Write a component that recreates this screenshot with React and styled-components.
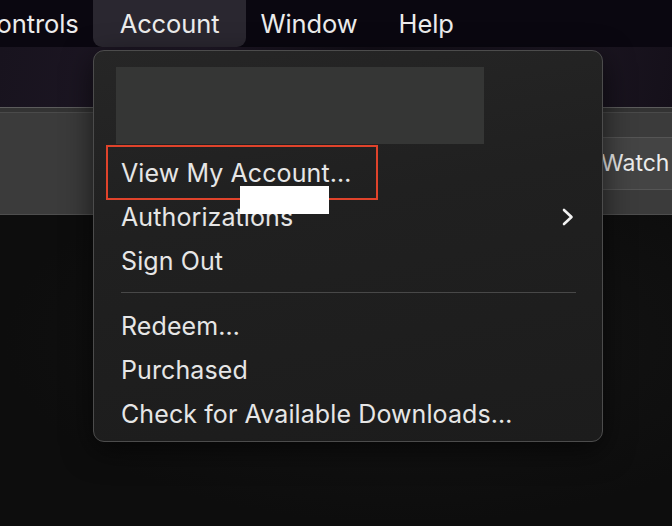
import React from "react";
import styled, { createGlobalStyle } from "styled-components";

const Global = createGlobalStyle`
  html, body {
    margin: 0;
    padding: 0;
    background: #0e0e0e;
  }
  body {
    font-family: Inter, "Noto Sans", "Liberation Sans", sans-serif;
    -webkit-font-smoothing: antialiased;
  }
`;

const Page = styled.div`
  position: relative;
  width: 672px;
  height: 526px;
  overflow: hidden;
  display: flex;
  flex-direction: column;
  background: #0f0f0f;
`;

const MenuBar = styled.div`
  height: 47px;
  flex: none;
  display: flex;
  align-items: center;
  gap: 13px;
  margin-left: -36px;
  background: #0a0710;
`;

const BarItem = styled.div`
  height: 47px;
  display: flex;
  align-items: center;
  padding: 0 ${(p) => (p.$active ? "27px" : "14px")};
  margin: 0 ${(p) => (p.$active ? "-13px" : "0")};
  border-radius: 0 0 9px 9px;
  background: ${(p) => (p.$active ? "#2a2730" : "transparent")};
  color: #ececec;
  font-size: 25.5px;
  letter-spacing: -0.1px;
`;

const Photo = styled.div`
  height: 60px;
  flex: none;
  background: linear-gradient(100deg, #18131e 0%, #1f1826 30%, #130f18 55%, #1d1723 80%, #15101a 100%);
`;

const Toolbar = styled.div`
  height: 108px;
  flex: none;
  display: flex;
  flex-direction: column;
  justify-content: center;
  align-items: flex-end;
  box-sizing: border-box;
  border-top: 1px solid #5c5c5c;
  border-bottom: 1px solid #4e4e4e;
  background: linear-gradient(#333 0, #333 4px, #4a4a4a 4px, #4a4a4a 5px, #3b3b3b 5px);
`;

const WatchButton = styled.div`
  height: 53px;
  width: 200px;
  margin-right: -4px;
  margin-top: 4px;
  box-sizing: border-box;
  display: flex;
  align-items: center;
  padding-left: 125px;
  border-top: 1px solid #555;
  border-bottom: 1px solid #555;
  background: #444;
  color: #ececec;
  font-size: 23px;
`;

const Floor = styled.div`
  flex: 1;
  background: radial-gradient(ellipse at 60% 40%, #151515 0%, #0d0d0d 70%);
`;

const Menu = styled.div`
  position: absolute;
  left: 93px;
  top: 50px;
  width: 510px;
  height: 392px;
  box-sizing: border-box;
  padding: 16px 0 7px;
  border: 1px solid #4c4c4c;
  border-radius: 11px;
  background: linear-gradient(170deg, #262626 0%, #202020 40%, #1c1c1c 100%);
  box-shadow: 0 8px 30px rgba(0, 0, 0, 0.6);
`;

const Placeholder = styled.div`
  width: 368px;
  height: 77px;
  margin: 0 0 7px 22px;
  background: #353635;
`;

const Row = styled.div`
  position: relative;
  height: 44px;
  display: flex;
  align-items: center;
  justify-content: space-between;
  padding: 0 26px 0 27px;
  color: #e6e6e6;
  font-size: 25px;
  letter-spacing: 0.1px;

  ${(p) =>
    p.$marked &&
    `
    &::after {
      content: "";
      position: absolute;
      left: 12px;
      top: -6px;
      width: 272px;
      height: 55px;
      box-sizing: border-box;
      border: 2px solid #e0432b;
    }
  `}
`;

const Separator = styled.div`
  height: 1px;
  margin: 9px 26px 11px 27px;
  background: #484848;
`;

const Redaction = styled.div`
  position: absolute;
  left: 146px;
  top: 135px;
  width: 89px;
  height: 28px;
  background: #ffffff;
`;

const Chevron = () => (
  <svg width="16" height="18" viewBox="0 0 16 18" fill="none">
    <path d="M4 2l7.5 7L4 16" stroke="#f2f2f2" strokeWidth="2.6" strokeLinecap="round" strokeLinejoin="round" />
  </svg>
);

export default function App() {
  return (
    <>
      <Global />
      <Page>
        <MenuBar>
          <BarItem>Controls</BarItem>
          <BarItem $active>Account</BarItem>
          <BarItem>Window</BarItem>
          <BarItem>Help</BarItem>
        </MenuBar>
        <Photo />
        <Toolbar>
          <WatchButton>Watch</WatchButton>
        </Toolbar>
        <Floor />
        <Menu>
          <Placeholder />
          <Row $marked>View My Account…</Row>
          <Row>
            Authorizations
            <Chevron />
          </Row>
          <Row>Sign Out</Row>
          <Separator />
          <Row>Redeem…</Row>
          <Row>Purchased</Row>
          <Row>Check for Available Downloads…</Row>
          <Redaction />
        </Menu>
      </Page>
    </>
  );
}
